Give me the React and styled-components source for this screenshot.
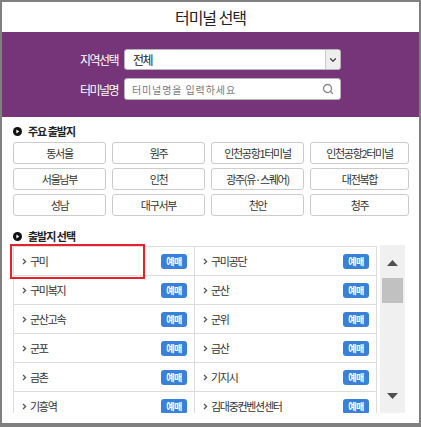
import React from 'react';
import styled, { createGlobalStyle } from 'styled-components';
import { Search, ChevronDown } from 'lucide-react';

const GlobalStyle = createGlobalStyle`
    html, body {
        margin: 0;
        padding: 0;
        background: #ffffff;
    }
    * {
        box-sizing: border-box;
    }
    body {
        font-family: "Noto Sans CJK KR", "Noto Sans", sans-serif;
        color: #333333;
    }
`

const Frame = styled.div`
    width: 421px;
    height: 427px;
    border: 2px solid #808080;
    border-bottom-width: 4px;
    background: #ffffff;
    display: flex;
    flex-direction: column;
    overflow: hidden;
`

const Title = styled.h1`
    margin: 0;
    height: 30px;
    display: flex;
    align-items: center;
    justify-content: center;
    font-size: 16px;
    font-weight: 400;
    letter-spacing: -1px;
    color: #222222;
`

const SearchBand = styled.div`
    height: 85px;
    background: #763578;
    display: grid;
    grid-template-columns: auto 217px;
    justify-content: center;
    align-content: center;
    align-items: center;
    column-gap: 6px;
    row-gap: 8px;
`

const FieldLabel = styled.label`
    color: #ffffff;
    font-size: 12px;
    letter-spacing: -1.6px;
    text-align: right;
`

const SelectBox = styled.div`
    height: 21px;
    background: #ffffff;
    border: 1px solid #b5b5b5;
    border-radius: 3px;
    display: flex;
    align-items: stretch;
    overflow: hidden;
`

const SelectValue = styled.span`
    flex: 1;
    display: flex;
    align-items: center;
    padding-left: 8px;
    font-size: 12px;
    letter-spacing: -1.5px;
    color: #222222;
`

const SelectArrow = styled.span`
    width: 15px;
    background: #eeeeee;
    border-left: 1px solid #cccccc;
    display: flex;
    align-items: center;
    justify-content: center;
    color: #444444;
`

const InputBox = styled.div`
    height: 22px;
    background: #ffffff;
    border: 1px solid #b5b5b5;
    border-radius: 3px;
    display: flex;
    align-items: center;
    padding: 0 6px 0 7px;
    color: #888888;
`

const TextInput = styled.input`
    flex: 1;
    min-width: 0;
    border: 0;
    outline: 0;
    background: transparent;
    font-family: inherit;
    font-size: 10px;
    letter-spacing: 0.9px;
    color: #333333;
    padding: 0;

    &::placeholder {
        color: #7a7a7a;
    }
`

const Body = styled.div`
    padding: 6px 10px 0 11px;
    display: flex;
    flex-direction: column;
`

const SectionTitle = styled.h2`
    margin: ${props => props.$top}px 0 0;
    height: 16px;
    display: flex;
    align-items: center;
    gap: 6px;
    font-size: 11px;
    font-weight: 700;
    letter-spacing: -1px;
    color: #222222;
`

const ButtonGrid = styled.div`
    margin-top: 3px;
    display: grid;
    grid-template-columns: 93px 93px 93px 99px;
    grid-auto-rows: 22px;
    column-gap: 6px;
    row-gap: 4px;
`

const TerminalButton = styled.button`
    border: 1px solid #cccccc;
    border-radius: 3px;
    background: #ffffff;
    font-family: inherit;
    font-size: 11px;
    letter-spacing: -1.3px;
    color: #333333;
    padding: 0;
    cursor: pointer;
`

const ListArea = styled.div`
    position: relative;
    margin-top: 1px;
    height: 168px;
    width: 392px;
    display: flex;
    gap: 3px;
`

const Table = styled.div`
    flex: 1;
    margin-top: 1px;
    border-top: 1px solid #dcdcdc;
    border-left: 1px solid #dcdcdc;
    border-right: 1px solid #dcdcdc;
    display: grid;
    grid-template-columns: 181px 1fr;
    grid-auto-rows: 29px;
    overflow: hidden;
`

const Cell = styled.div`
    border-bottom: 1px solid #dcdcdc;
    border-right: ${props => (props.$left ? '1px solid #dcdcdc' : '0')};
    display: flex;
    align-items: center;
    padding: 0 7px 0 8px;
    gap: 3px;
    font-size: 11px;
    letter-spacing: -1.3px;
    color: #333333;
`

const Name = styled.span`
    flex: 1;
    white-space: nowrap;
`

const Badge = styled.span`
    width: 26px;
    height: 15px;
    border-radius: 3px;
    background: #3a80d8;
    color: #ffffff;
    font-size: 9px;
    font-weight: 700;
    letter-spacing: -0.5px;
    display: flex;
    align-items: center;
    justify-content: center;
`

const ScrollTrack = styled.div`
    width: 25px;
    background: #f0f0f0;
    display: flex;
    flex-direction: column;
    align-items: center;
    padding: 2px 2px;
`

const ScrollButton = styled.div`
    height: 31px;
    width: 100%;
    display: flex;
    align-items: center;
    justify-content: center;
`

const ScrollThumb = styled.div`
    width: 21px;
    height: 25px;
    background: #c1c1c1;
`

const Highlight = styled.div`
    position: absolute;
    left: -3px;
    top: -1px;
    width: 135px;
    height: 35px;
    border: 2px solid #e4222b;
    pointer-events: none;
`

const Bullet = () => (
    <svg width="9" height="9" viewBox="0 0 9 9">
        <circle cx="4.5" cy="4.5" r="4.5" fill="#111" />
        <path d="M3.4 2.4 L6.2 4.5 L3.4 6.6 Z" fill="#fff" />
    </svg>
)

const Chevron = () => (
    <svg width="5" height="7" viewBox="0 0 5 7">
        <path d="M1 1 L3.6 3.5 L1 6" fill="none" stroke="#555" strokeWidth="1.3" />
    </svg>
)

const Triangle = ({ up }) => (
    <svg width="11" height="6" viewBox="0 0 11 6">
        <path d={up ? 'M0 6 L5.5 0 L11 6 Z' : 'M0 0 L5.5 6 L11 0 Z'} fill="#505050" />
    </svg>
)

const majors = [
    '동서울', '원주', '인천공항1터미널', '인천공항2터미널',
    '서울남부', '인천', '광주(유·스퀘어)', '대전복합',
    '성남', '대구서부', '천안', '청주',
]

const terminals = [
    '구미', '구미공단', '구미복지', '군산', '군산고속', '군위',
    '군포', '금산', '금촌', '기지시', '기흥역', '김대중컨벤션센터',
]

const App = () => (
    <>
        <GlobalStyle />
        <Frame>
            <Title>터미널 선택</Title>
            <SearchBand>
                <FieldLabel>지역선택</FieldLabel>
                <SelectBox>
                    <SelectValue>전체</SelectValue>
                    <SelectArrow>
                        <ChevronDown size={10} strokeWidth={3} />
                    </SelectArrow>
                </SelectBox>
                <FieldLabel>터미널명</FieldLabel>
                <InputBox>
                    <TextInput placeholder="터미널명을 입력하세요" />
                    <Search size={12} strokeWidth={2.6} />
                </InputBox>
            </SearchBand>
            <Body>
                <SectionTitle $top={0}>
                    <Bullet />
                    주요 출발지
                </SectionTitle>
                <ButtonGrid>
                    {majors.map(name => (
                        <TerminalButton key={name}>{name}</TerminalButton>
                    ))}
                </ButtonGrid>
                <SectionTitle $top={12}>
                    <Bullet />
                    출발지 선택
                </SectionTitle>
                <ListArea>
                    <Table>
                        {terminals.map((name, i) => (
                            <Cell key={name} $left={i % 2 === 0}>
                                <Chevron />
                                <Name>{name}</Name>
                                <Badge>예매</Badge>
                            </Cell>
                        ))}
                    </Table>
                    <ScrollTrack>
                        <ScrollButton>
                            <Triangle up />
                        </ScrollButton>
                        <ScrollThumb />
                        <div style={{ flex: 1 }} />
                        <ScrollButton>
                            <Triangle />
                        </ScrollButton>
                    </ScrollTrack>
                    <Highlight />
                </ListArea>
            </Body>
        </Frame>
    </>
)

export default App;
